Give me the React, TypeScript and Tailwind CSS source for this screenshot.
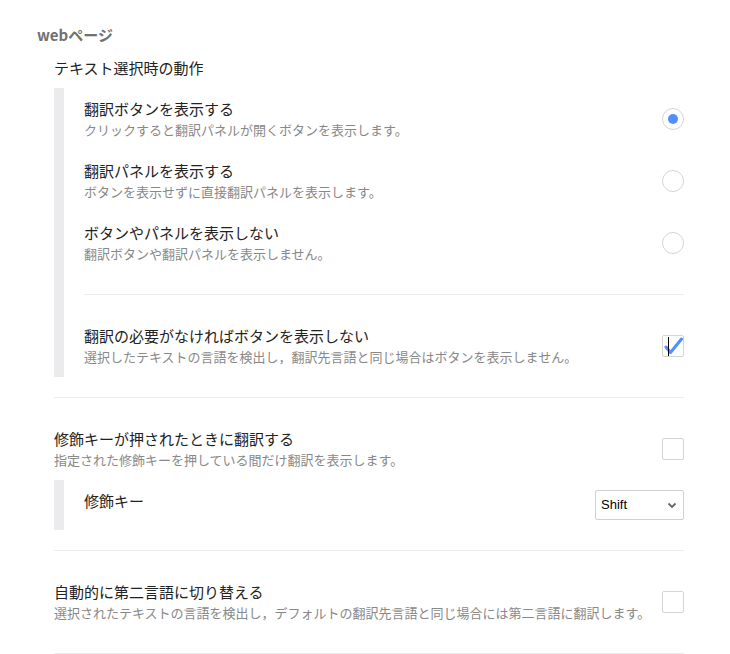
import React from "react";

const font = { fontFamily: '"Noto Sans CJK JP", "Noto Sans", sans-serif' };

type Option = { title: string; desc: string; checked?: boolean };

const displayOptions: Option[] = [
  {
    title: "翻訳ボタンを表示する",
    desc: "クリックすると翻訳パネルが開くボタンを表示します。",
    checked: true,
  },
  {
    title: "翻訳パネルを表示する",
    desc: "ボタンを表示せずに直接翻訳パネルを表示します。",
  },
  {
    title: "ボタンやパネルを表示しない",
    desc: "翻訳ボタンや翻訳パネルを表示しません。",
  },
];

function Radio({ checked }: { checked?: boolean }) {
  return (
    <div className="flex h-[22px] w-[22px] shrink-0 items-center justify-center rounded-full border border-[#d4d4d4] bg-white">
      {checked && <div className="h-[10px] w-[10px] rounded-full bg-[#4d90fe]" />}
    </div>
  );
}

function Checkbox({ checked }: { checked?: boolean }) {
  return (
    <div className="relative h-[22px] w-[22px] shrink-0 rounded-[2px] border border-[#d4d4d4] bg-white">
      {checked && (
        <>
          <svg className="absolute left-0 top-0" width="20" height="20" viewBox="0 0 20 20">
            <path d="M3 11 L7.5 16.5 L18.5 3" fill="none" stroke="#4d90fe" strokeWidth="3" strokeLinecap="round" strokeLinejoin="round" />
          </svg>
          {/* キャレット */}
          <div className="absolute left-[5px] top-[1px] h-[19px] w-px bg-black" />
        </>
      )}
    </div>
  );
}

function Row({ title, desc, control }: { title: string; desc: string; control: React.ReactNode }) {
  return (
    <div className="flex items-center justify-between pt-[11px] pb-[12px]">
      <div>
        <div className="text-[15px] leading-[20px] text-[#222]">{title}</div>
        <div className="mt-[3px] text-[13px] leading-[16px] text-[#888]">{desc}</div>
      </div>
      {control}
    </div>
  );
}

export default function App() {
  return (
    <div className="min-h-[654px] bg-white" style={font}>
      <div className="w-[684px] pt-[24px] pl-[37px]">
        <h2 className="text-[15px] font-bold leading-[22px] text-[#707070]">webページ</h2>

        <div className="ml-[17px]">
          <div className="mt-[11px] text-[15px] leading-[22px] text-[#222]">テキスト選択時の動作</div>

          {/* 表示方法 */}
          <div className="mt-[9px] border-l-[10px] border-[#ebebed] pl-[20px]">
            {displayOptions.map((o) => (
              <Row key={o.title} title={o.title} desc={o.desc} control={<Radio checked={o.checked} />} />
            ))}
            <div className="my-5 h-px bg-[#ebebeb]" />
            <Row
              title="翻訳の必要がなければボタンを表示しない"
              desc="選択したテキストの言語を検出し，翻訳先言語と同じ場合はボタンを表示しません。"
              control={<Checkbox checked />}
            />
          </div>

          <div className="my-5 h-px bg-[#ebebeb]" />

          {/* 修飾キー */}
          <Row
            title="修飾キーが押されたときに翻訳する"
            desc="指定された修飾キーを押している間だけ翻訳を表示します。"
            control={<Checkbox />}
          />
          <div className="flex items-start justify-between border-l-[10px] border-[#ebebed] py-[10px] pl-[20px]">
            <div className="text-[15px] leading-[22px] text-[#222]">修飾キー</div>
            <div className="flex h-[30px] w-[89px] items-center justify-between rounded-[2px] border border-[#d0d0d0] bg-white pl-[5px] pr-[6px]">
              <span className="text-[13px] text-black" style={{ fontFamily: '"Liberation Sans", Arial, sans-serif' }}>
                Shift
              </span>
              <svg width="10" height="7" viewBox="0 0 10 7">
                <path d="M1.5 1.5 L5 5 L8.5 1.5" fill="none" stroke="#666" strokeWidth="1.8" />
              </svg>
            </div>
          </div>

          <div className="my-5 h-px bg-[#ebebeb]" />

          <Row
            title="自動的に第二言語に切り替える"
            desc="選択されたテキストの言語を検出し，デフォルトの翻訳先言語と同じ場合には第二言語に翻訳します。"
            control={<Checkbox />}
          />

          <div className="mt-5 h-px bg-[#ebebeb]" />
        </div>
      </div>
    </div>
  );
}
